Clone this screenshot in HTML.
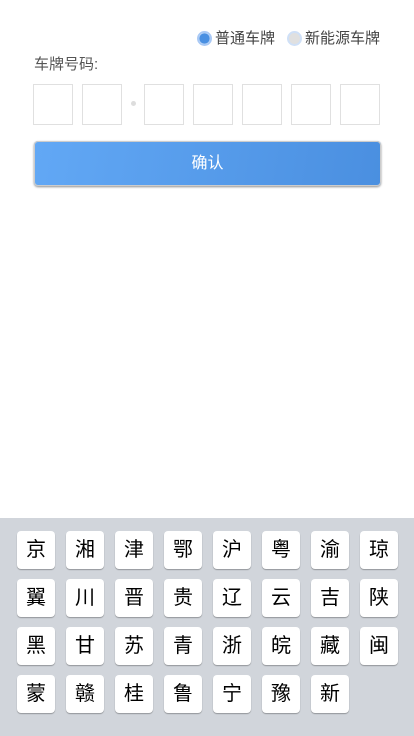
<!DOCTYPE html>
<html><head><meta charset="utf-8"><style>
*{margin:0;padding:0;box-sizing:border-box}
body{width:414px;height:736px;background:#fff;font-family:"Liberation Sans","Noto Sans CJK SC",sans-serif;position:relative;overflow:hidden}
.abs{position:absolute}
.radio{position:absolute;width:15px;height:15px;border-radius:50%;top:31px}
.lbl{position:absolute;top:29px;font-size:15px;color:#444;line-height:20px}
.box{position:absolute;top:84px;width:40px;height:41px;border:1px solid #e0e0e0}
.kb{position:absolute;left:0;top:518px;width:414px;height:218px;background:#d1d5db}
.k{position:absolute;width:38px;height:38px;background:#fff;border-radius:4px;box-shadow:0 1px 1px rgba(0,0,0,.3);font-size:20px;line-height:38px;text-align:center;color:#000}
</style></head><body>
<div class="radio" style="left:197px;border:2px solid #a9c9f5;background:radial-gradient(circle,#4a90e2 0 5px,#fff 5.5px)"></div>
<div class="lbl" style="left:215px">普通车牌</div>
<div class="radio" style="left:287px;border:2px solid #cfe0f7;background:#e0e0e0"></div>
<div class="lbl" style="left:305px">新能源车牌</div>
<div class="abs" style="left:34px;top:55px;font-size:15px;color:#555;line-height:20px">车牌号码:</div>
<div class="box" style="left:33px"></div>
<div class="box" style="left:82px"></div>
<div class="abs" style="left:131px;top:101px;width:5px;height:5px;border-radius:50%;background:#ddd"></div>
<div class="box" style="left:144px"></div>
<div class="box" style="left:193px"></div>
<div class="box" style="left:242px"></div>
<div class="box" style="left:291px"></div>
<div class="box" style="left:340px"></div>
<div class="abs" style="left:34px;top:141px;width:347px;height:45px;border-radius:4px;background:linear-gradient(100deg,#62a8f5,#4a8fe0);box-shadow:0 1px 2px rgba(0,0,0,.45),inset 0 0 0 1px #ccc;color:#fff;font-size:16px;line-height:45px;text-align:center">确认</div>
<div class="kb">
<div class="k" style="left:17px;top:13px">京</div><div class="k" style="left:66px;top:13px">湘</div><div class="k" style="left:115px;top:13px">津</div><div class="k" style="left:164px;top:13px">鄂</div><div class="k" style="left:213px;top:13px">沪</div><div class="k" style="left:262px;top:13px">粤</div><div class="k" style="left:311px;top:13px">渝</div><div class="k" style="left:360px;top:13px">琼</div>
<div class="k" style="left:17px;top:61px">翼</div><div class="k" style="left:66px;top:61px">川</div><div class="k" style="left:115px;top:61px">晋</div><div class="k" style="left:164px;top:61px">贵</div><div class="k" style="left:213px;top:61px">辽</div><div class="k" style="left:262px;top:61px">云</div><div class="k" style="left:311px;top:61px">吉</div><div class="k" style="left:360px;top:61px">陕</div>
<div class="k" style="left:17px;top:109px">黑</div><div class="k" style="left:66px;top:109px">甘</div><div class="k" style="left:115px;top:109px">苏</div><div class="k" style="left:164px;top:109px">青</div><div class="k" style="left:213px;top:109px">浙</div><div class="k" style="left:262px;top:109px">皖</div><div class="k" style="left:311px;top:109px">藏</div><div class="k" style="left:360px;top:109px">闽</div>
<div class="k" style="left:17px;top:157px">蒙</div><div class="k" style="left:66px;top:157px">赣</div><div class="k" style="left:115px;top:157px">桂</div><div class="k" style="left:164px;top:157px">鲁</div><div class="k" style="left:213px;top:157px">宁</div><div class="k" style="left:262px;top:157px">豫</div><div class="k" style="left:311px;top:157px">新</div>
</div>
</body></html>
